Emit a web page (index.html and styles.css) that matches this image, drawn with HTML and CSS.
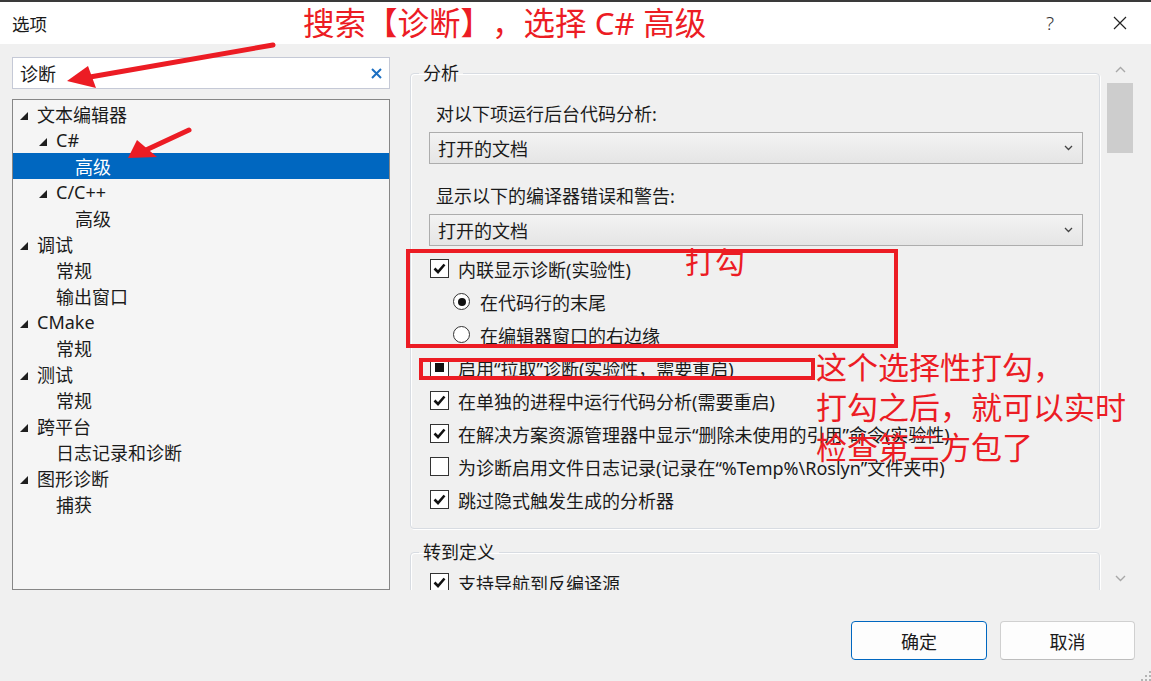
FILE: index.html
```html
<!DOCTYPE html>
<html lang="zh-CN">
<head>
  <meta charset="UTF-8" />
  <title>选项</title>
  <link rel="stylesheet" href="styles.css">
</head>
<body>
<div class="dialog">
  <div class="titlebar">
    <span class="title">选项</span>
    <span class="help">?</span>
    <svg class="close" width="14" height="14" viewBox="0 0 14 14"><path d="M1 1L13 13M13 1L1 13" stroke="#222" stroke-width="1.2"/></svg>
  </div>

  <div class="main">
    <div class="left">
      <div class="search">
        <span class="search-text">诊断</span>
        <svg width="11" height="11" viewBox="0 0 11 11"><path d="M1 1L10 10M10 1L1 10" stroke="#1c6fc2" stroke-width="2"/></svg>
      </div>

      <ul class="tree">
        <li class="row l0"><span class="tw"><svg width="8" height="8"><polygon points="8,0 8,8 0,8" fill="#1e1e1e"/></svg></span>文本编辑器</li>
        <li class="row l1"><span class="tw"><svg width="8" height="8"><polygon points="8,0 8,8 0,8" fill="#1e1e1e"/></svg></span>C#</li>
        <li class="row l2 selected"><span class="tw"></span>高级</li>
        <li class="row l1"><span class="tw"><svg width="8" height="8"><polygon points="8,0 8,8 0,8" fill="#1e1e1e"/></svg></span>C/C++</li>
        <li class="row l2"><span class="tw"></span>高级</li>
        <li class="row l0"><span class="tw"><svg width="8" height="8"><polygon points="8,0 8,8 0,8" fill="#1e1e1e"/></svg></span>调试</li>
        <li class="row l1"><span class="tw"></span>常规</li>
        <li class="row l1"><span class="tw"></span>输出窗口</li>
        <li class="row l0"><span class="tw"><svg width="8" height="8"><polygon points="8,0 8,8 0,8" fill="#1e1e1e"/></svg></span>CMake</li>
        <li class="row l1"><span class="tw"></span>常规</li>
        <li class="row l0"><span class="tw"><svg width="8" height="8"><polygon points="8,0 8,8 0,8" fill="#1e1e1e"/></svg></span>测试</li>
        <li class="row l1"><span class="tw"></span>常规</li>
        <li class="row l0"><span class="tw"><svg width="8" height="8"><polygon points="8,0 8,8 0,8" fill="#1e1e1e"/></svg></span>跨平台</li>
        <li class="row l1"><span class="tw"></span>日志记录和诊断</li>
        <li class="row l0"><span class="tw"><svg width="8" height="8"><polygon points="8,0 8,8 0,8" fill="#1e1e1e"/></svg></span>图形诊断</li>
        <li class="row l1"><span class="tw"></span>捕获</li>
      </ul>
    </div>

    <div class="right">
      <div class="pane">
        <fieldset class="group">
          <legend>分析</legend>
          <div class="field-label">对以下项运行后台代码分析:</div>
          <div class="combo">
            <span class="combo-text">打开的文档</span>
            <svg width="9" height="6" viewBox="0 0 9 6"><path d="M1 1L4.5 4.5L8 1" fill="none" stroke="#444" stroke-width="1.3"/></svg>
          </div>
          <div class="field-label second">显示以下的编译器错误和警告:</div>
          <div class="combo">
            <span class="combo-text">打开的文档</span>
            <svg width="9" height="6" viewBox="0 0 9 6"><path d="M1 1L4.5 4.5L8 1" fill="none" stroke="#444" stroke-width="1.3"/></svg>
          </div>

          <div class="options">
            <div class="opt"><span class="box"><svg width="17" height="17" viewBox="0 0 17 17"><path d="M3.5 8.5L7 12L13.5 4.5" fill="none" stroke="#111" stroke-width="2.6"/></svg></span>内联显示诊断(实验性)</div>
            <div class="opt sub"><span class="radio on"></span>在代码行的末尾</div>
            <div class="opt sub"><span class="radio"></span>在编辑器窗口的右边缘</div>
            <div class="opt"><span class="box"><span class="fill"></span></span>启用“拉取”诊断(实验性，需要重启)</div>
            <div class="opt"><span class="box"><svg width="17" height="17" viewBox="0 0 17 17"><path d="M3.5 8.5L7 12L13.5 4.5" fill="none" stroke="#111" stroke-width="2.6"/></svg></span>在单独的进程中运行代码分析(需要重启)</div>
            <div class="opt"><span class="box"><svg width="17" height="17" viewBox="0 0 17 17"><path d="M3.5 8.5L7 12L13.5 4.5" fill="none" stroke="#111" stroke-width="2.6"/></svg></span>在解决方案资源管理器中显示“删除未使用的引用”命令(实验性)</div>
            <div class="opt"><span class="box"></span>为诊断启用文件日志记录(记录在“%Temp%\Roslyn”文件夹中)</div>
            <div class="opt"><span class="box"><svg width="17" height="17" viewBox="0 0 17 17"><path d="M3.5 8.5L7 12L13.5 4.5" fill="none" stroke="#111" stroke-width="2.6"/></svg></span>跳过隐式触发生成的分析器</div>
          </div>
        </fieldset>

        <fieldset class="group next">
          <legend>转到定义</legend>
          <div class="options tight">
            <div class="opt"><span class="box"><svg width="17" height="17" viewBox="0 0 17 17"><path d="M3.5 8.5L7 12L13.5 4.5" fill="none" stroke="#111" stroke-width="2.6"/></svg></span>支持导航到反编译源</div>
          </div>
        </fieldset>
      </div>

      <div class="scrollbar">
        <div class="sb-arrow up"><svg width="11" height="7" viewBox="0 0 11 7"><path d="M1 6L5.5 1.5L10 6" fill="none" stroke="#a8a8a8" stroke-width="1.4"/></svg></div>
        <div class="sb-thumb"></div>
        <div class="sb-track"></div>
        <div class="sb-arrow"><svg width="11" height="7" viewBox="0 0 11 7"><path d="M1 1L5.5 5.5L10 1" fill="none" stroke="#a8a8a8" stroke-width="1.4"/></svg></div>
      </div>
    </div>
  </div>

  <div class="footer">
    <div class="buttons">
      <button class="btn primary">确定</button>
      <button class="btn">取消</button>
    </div>
    <svg class="grip" width="11" height="11" viewBox="0 0 11 11">
      <rect x="9" y="1" width="2" height="2" fill="#b4b4b4"/>
      <rect x="5" y="5" width="2" height="2" fill="#b4b4b4"/>
      <rect x="9" y="5" width="2" height="2" fill="#b4b4b4"/>
      <rect x="1" y="9" width="2" height="2" fill="#b4b4b4"/>
      <rect x="5" y="9" width="2" height="2" fill="#b4b4b4"/>
      <rect x="9" y="9" width="2" height="2" fill="#b4b4b4"/>
    </svg>
  </div>

  <!-- red annotations drawn over the screenshot -->
  <svg class="marks" width="1151" height="681" viewBox="0 0 1151 681">
    <g stroke="#ec1c24" fill="none" stroke-width="4">
      <rect x="408" y="251" width="488" height="95"/>
      <rect x="421" y="360" width="392" height="18"/>
    </g>
    <g stroke="#ec1c24" stroke-width="5" stroke-linecap="round">
      <line x1="273" y1="45" x2="90" y2="77"/>
      <line x1="189" y1="130" x2="146" y2="150"/>
    </g>
    <g fill="#ec1c24">
      <polygon points="67,81 88,66 96,88"/>
      <polygon points="128,158 137,140 157,157"/>
    </g>
  </svg>
  <div class="note note-top">搜索【诊断】，选择 C# 高级</div>
  <div class="note note-tick">打勾</div>
  <div class="note note-side">这个选择性打勾，<br>打勾之后，就可以实时<br>检查第三方包了</div>
</div>
</body>
</html>
```

FILE: styles.css
```css
* { box-sizing: border-box; }

html, body { margin: 0; }
body {
  width: 1151px;
  height: 681px;
  overflow: hidden;
  background: #f0f0f0;
  font-family: "Noto Sans", "Noto Sans CJK SC", sans-serif;
  font-size: 18px;
  color: #1a1a1a;
  text-spacing-trim: space-all;
}

.dialog {
  position: relative;
  height: 681px;
  display: flex;
  flex-direction: column;
}

/* ---------- title bar ---------- */
.titlebar {
  height: 44px;
  flex: none;
  border-top: 2px solid #3a3a3a;
  background: #fff;
  display: flex;
  align-items: center;
  padding-left: 12px;
}
.title { flex: 1; font-size: 17.5px; }
.help {
  width: 20px;
  margin-right: 53px;
  text-align: center;
  font-weight: 300;
  font-size: 19px;
  color: #333;
}
.close { margin-right: 24px; }

/* ---------- main area ---------- */
.main {
  height: 546px;
  flex: none;
  display: flex;
  gap: 15px;
  padding: 13px 15px 0 12px;
}

.left {
  width: 378px;
  display: flex;
  flex-direction: column;
}

.search {
  height: 32px;
  border: 1px solid #c5c9d6;
  background: #fff;
  display: flex;
  align-items: center;
  padding: 0 7px;
}
.search-text { flex: 1; }

.tree {
  list-style: none;
  margin: 10px 0 0;
  padding: 0;
  height: 491px;
  border: 1px solid #868686;
  background: #f5f5f5;
}
.row {
  height: 26px;
  display: flex;
  align-items: center;
  white-space: nowrap;
  color: #1b1b1b;
}
.row.l0 { padding-left: 7px; }
.row.l1 { padding-left: 26px; }
.row.l2 { padding-left: 45px; }
.row:first-child { margin-top: 1px; }
.row.selected { background: #0067c0; color: #fff; }
.tw {
  width: 17px;
  flex: none;
  display: flex;
  align-items: center;
  padding-top: 3px;
}

/* ---------- right pane ---------- */
.right {
  width: 731px;
  height: 533px;
  display: flex;
  overflow: hidden;
}
.pane {
  flex: 1;
  overflow: hidden;
  padding: 6px 4px 0 5px;
}

.group {
  margin: 0;
  min-width: 0;
  padding: 18px 16px 12px 18px;
  border: 1px solid #d8dce2;
  border-radius: 4px;
  box-shadow: 1px 1px 0 #fff, inset 1px 1px 0 #fff;
}
.group.next { margin-top: 13px; padding-top: 4px; }
.group legend {
  margin-left: -10px;
  padding: 0 4px;
  line-height: 20px;
}

.field-label { line-height: 26px; padding-left: 7px; }
.field-label.second { margin-top: 19px; }

.combo {
  margin-top: 5px;
  height: 32px;
  border: 1px solid #adadad;
  background: linear-gradient(#f3f3f3, #e5e5e5);
  display: flex;
  align-items: center;
  padding-left: 8px;
}
.combo-text { flex: 1; }
.combo svg { margin-right: 9px; }

.options { margin-top: 6px; }
.options.tight { margin-top: 0; }
.opt {
  height: 33px;
  display: flex;
  align-items: center;
  white-space: nowrap;
}

.box {
  width: 19px;
  height: 19px;
  flex: none;
  margin: 0 9px 0 1px;
  border: 1px solid #333;
  background: #fff;
  display: flex;
  align-items: center;
  justify-content: center;
}
.box .fill { width: 9px; height: 9px; background: #111; }

.opt.sub { padding-left: 24px; }
.radio {
  width: 17px;
  height: 17px;
  flex: none;
  margin-right: 10px;
  border: 1px solid #333;
  border-radius: 50%;
  background: #fff;
  display: flex;
  align-items: center;
  justify-content: center;
}
.radio.on::after {
  content: "";
  width: 8px;
  height: 8px;
  border-radius: 50%;
  background: #111;
}

/* ---------- scrollbar ---------- */
.scrollbar {
  width: 32px;
  display: flex;
  flex-direction: column;
  align-items: center;
}
.sb-arrow {
  height: 24px;
  display: flex;
  align-items: center;
  justify-content: center;
}
.sb-arrow.up { height: 25px; }
.sb-thumb {
  margin-top: 1px;
  width: 26px;
  height: 70px;
  background: #cdcdcd;
}
.sb-track { flex: 1; }

/* ---------- footer ---------- */
.footer {
  flex: 1;
  display: flex;
  justify-content: flex-end;
  padding-top: 31px;
}
.buttons {
  display: flex;
  gap: 13px;
  align-items: flex-start;
}
.btn {
  width: 135px;
  height: 39px;
  font: inherit;
  color: #1a1a1a;
  background: #fdfdfd;
  border: 1px solid #d0d0d0;
  border-bottom-color: #bdbdbd;
  border-radius: 4px;
}
.btn.primary { width: 136px; border-color: #0067c0; }
.grip { align-self: flex-end; margin-left: 5px; }

/* ---------- annotations ---------- */
.marks {
  position: absolute;
  left: 0;
  top: 0;
  pointer-events: none;
}
.note {
  position: absolute;
  color: #ec1c24;
  line-height: 1;
  white-space: nowrap;
}
.note-top { left: 303px; top: 7px; font-size: 31.5px; }
.note-tick { left: 685px; top: 247px; font-size: 30px; }
.note-side { left: 816px; top: 347px; font-size: 31px; line-height: 40px; }
```
